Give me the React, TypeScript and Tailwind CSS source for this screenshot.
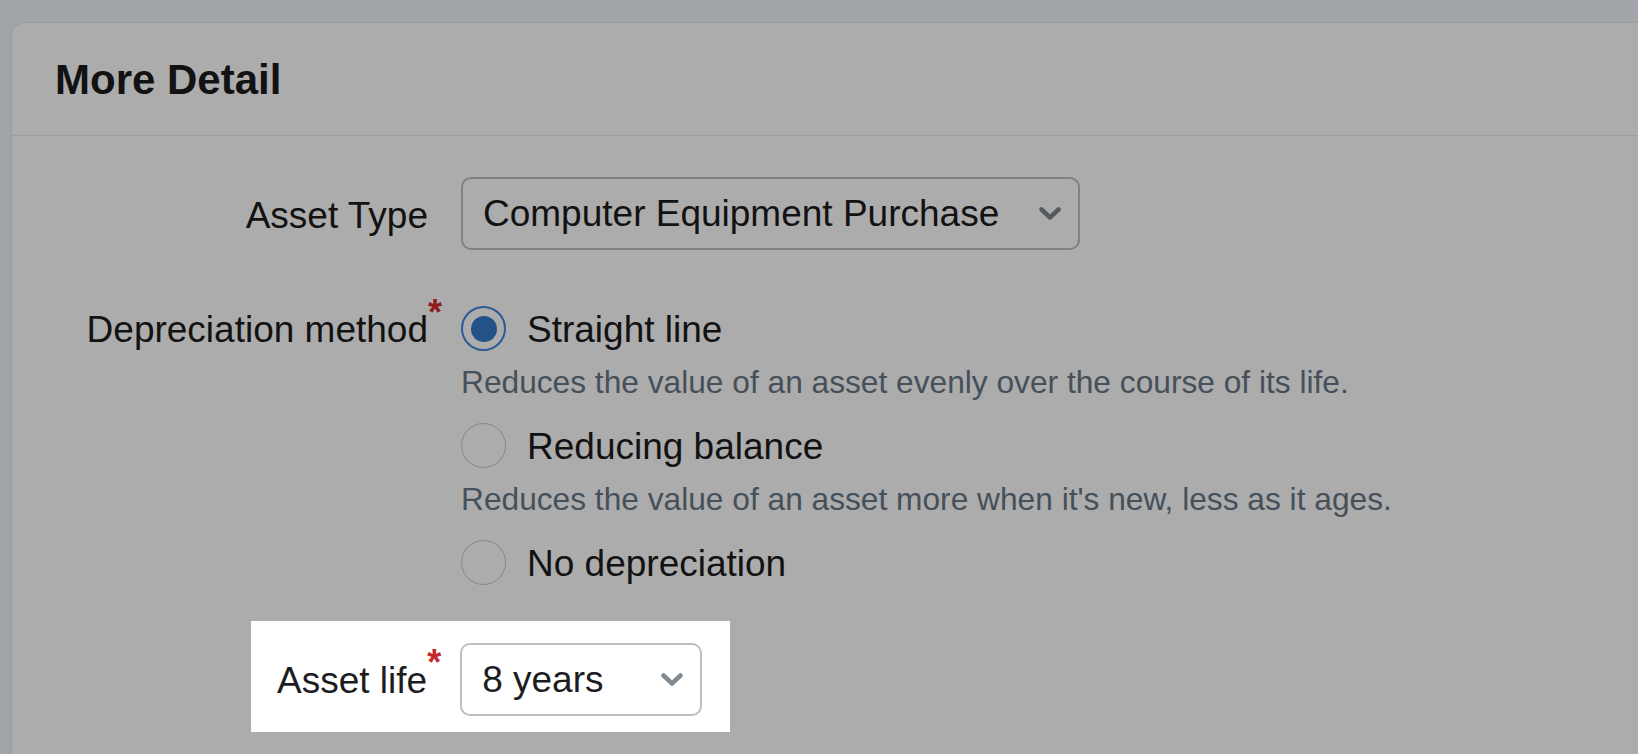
import React from "react";

const font = { fontFamily: '"Liberation Sans", Arial, sans-serif' };

function Chevron({ color }: { color: string }) {
  return (
    <svg width="22" height="13" viewBox="0 0 22 13" fill="none">
      <path
        d="M2.5 2.5 L11 10.5 L19.5 2.5"
        stroke={color}
        strokeWidth="4.5"
        strokeLinecap="round"
        strokeLinejoin="round"
      />
    </svg>
  );
}

function Radio({ checked }: { checked?: boolean }) {
  if (checked) {
    return (
      <div className="w-[45px] h-[45px] shrink-0 rounded-full border-2 border-[#2b5b97] flex items-center justify-center">
        <div className="w-[26px] h-[26px] rounded-full bg-[#245288]" />
      </div>
    );
  }
  return <div className="w-[45px] h-[45px] shrink-0 rounded-full border-[1.5px] border-[#83888c]" />;
}

function Option({ label, desc, checked }: { label: string; desc?: string; checked?: boolean }) {
  return (
    <div className="flex flex-col">
      <div className="flex items-start h-[45px]">
        <Radio checked={checked} />
        <span className="ml-[21px] pt-[3px] text-[37px] leading-[42px] text-[#121212] whitespace-nowrap">{label}</span>
      </div>
      {desc && (
        <div className="mt-[11px] text-[31.7px] leading-[40px] text-[#45505a] whitespace-nowrap">{desc}</div>
      )}
    </div>
  );
}

export default function App() {
  return (
    <div className="h-[754px] w-full overflow-hidden bg-[#a1a4a9] pt-[22px] pl-[11px] flex flex-col" style={font}>
      <div className="flex-1 bg-[#acacac] border-t border-l border-[#9c9da2] rounded-tl-[14px] flex flex-col">
        <div className="h-[113px] shrink-0 flex items-center pl-[43px] pt-[2px] border-b border-[#9c9da2]">
          <h2 className="text-[42px] font-bold text-[#121212] leading-none">More Detail</h2>
        </div>

        <div className="pt-[41px] flex flex-col">
          {/* Asset Type */}
          <div className="flex items-center">
            <div className="w-[431px] shrink-0 flex justify-end items-center">
              <span className="text-[37px] leading-[45px] text-[#121212] pt-[4px] whitespace-nowrap">Asset Type</span>
              <span className="w-[15px]" />
            </div>
            <div className="ml-[18px] w-[619px] h-[73px] rounded-[10px] border-2 border-[#7c8185] flex items-center justify-between pl-[20px] pr-[17px]">
              <span className="text-[37px] leading-[45px] text-[#121212] whitespace-nowrap">Computer Equipment Purchase</span>
              <Chevron color="#545c63" />
            </div>
          </div>

          {/* Depreciation method */}
          <div className="mt-[56px] flex items-start">
            <div className="w-[431px] shrink-0 flex justify-end items-start">
              <span className="text-[37px] leading-[42px] pt-[3px] text-[#121212] whitespace-nowrap">Depreciation method</span>
              <span className="w-[15px] -mt-[11px] text-[36px] leading-[36px] font-bold text-[#8e1c1c]">*</span>
            </div>
            <div className="ml-[18px] flex flex-col gap-[21px]">
              <Option checked label="Straight line" desc="Reduces the value of an asset evenly over the course of its life." />
              <Option label="Reducing balance" desc="Reduces the value of an asset more when it's new, less as it ages." />
              <Option label="No depreciation" />
            </div>
          </div>

          {/* Asset life (highlighted) */}
          <div className="mt-[36px] flex">
            <div className="ml-[239px] bg-white flex items-center pt-[22px] pb-[16px] pl-[26px] pr-[28px]">
              <div className="flex items-start">
                <span className="text-[37px] leading-[43px] pt-[2px] text-[#1d1d1f] whitespace-nowrap">Asset life</span>
                <span className="w-[15px] -mt-[12px] text-[36px] leading-[36px] font-bold text-[#c62a2a]">*</span>
              </div>
              <div className="ml-[18px] w-[242px] h-[73px] rounded-[10px] border-2 border-[#b9c0c5] flex items-center justify-between pl-[20px] pr-[17px]">
                <span className="text-[37px] leading-[45px] text-[#1d1d1f] whitespace-nowrap">8 years</span>
                <Chevron color="#808b93" />
              </div>
            </div>
          </div>
        </div>
      </div>
    </div>
  );
}
